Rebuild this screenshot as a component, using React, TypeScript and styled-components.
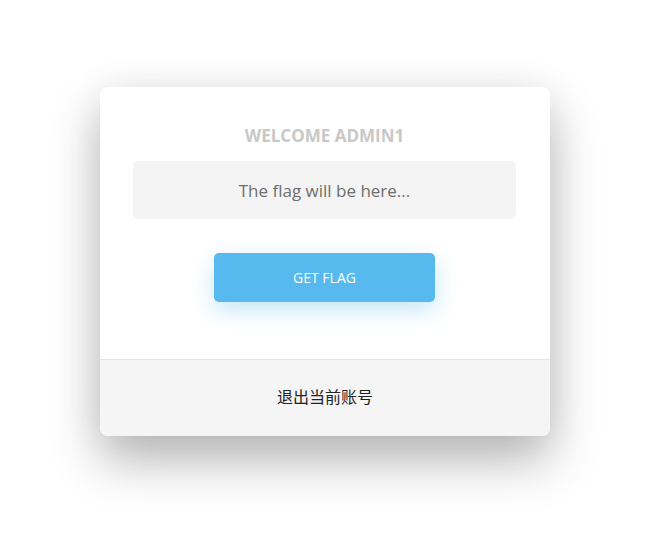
import React from "react";
import styled, { createGlobalStyle } from "styled-components";

const Global = createGlobalStyle`
  html, body { margin: 0; padding: 0; background: #fff; }
  body { font-family: "Open Sans", "Noto Sans", "Noto Sans CJK SC", sans-serif; }
`;

const Page = styled.div`
  width: 667px;
  height: 548px;
  box-sizing: border-box;
  padding: 87px 0 0 100px;
`;

const Card = styled.div`
  width: 450px;
  height: 349px;
  background: #fff;
  border-radius: 8px;
  box-shadow: 0 25px 50px rgba(0, 0, 0, 0.28), 0 0 40px rgba(0, 0, 0, 0.06);
  display: flex;
  flex-direction: column;
  overflow: hidden;
`;

const Body = styled.div`
  flex: 1;
  padding: 38px 34px 0 33px;
  display: flex;
  flex-direction: column;
  align-items: center;
  border-bottom: 1px solid #e1e5ea;
`;

const Title = styled.h2`
  margin: 0;
  font-size: 17px;
  line-height: 21px;
  font-weight: 700;
  color: #c8c8c8;
  letter-spacing: 0;
`;

const FlagBox = styled.div`
  margin-top: 15px;
  align-self: stretch;
  height: 58px;
  background: #f4f4f4;
  border-radius: 5px;
  display: flex;
  align-items: center;
  justify-content: center;
  font-size: 17px;
  color: #6e6e6e;
`;

const Button = styled.button`
  margin-top: 34px;
  width: 221px;
  height: 49px;
  border: none;
  border-radius: 5px;
  background: #57b9ed;
  color: #fff;
  font-family: inherit;
  font-size: 14px;
  box-shadow: 0 8px 22px rgba(87, 185, 237, 0.35);
  cursor: pointer;
`;

const Footer = styled.div`
  height: 76px;
  box-sizing: border-box;
  padding-bottom: 4px;
  background: #f5f5f5;
  display: flex;
  align-items: center;
  justify-content: center;
  font-family: "Noto Sans CJK SC", sans-serif;
  font-size: 16px;
  color: #222;
`;

export default function App() {
  return (
    <Page>
      <Global />
      <Card>
        <Body>
          <Title>WELCOME ADMIN1</Title>
          <FlagBox>The flag will be here...</FlagBox>
          <Button>GET FLAG</Button>
        </Body>
        <Footer>退出当前账号</Footer>
      </Card>
    </Page>
  );
}
